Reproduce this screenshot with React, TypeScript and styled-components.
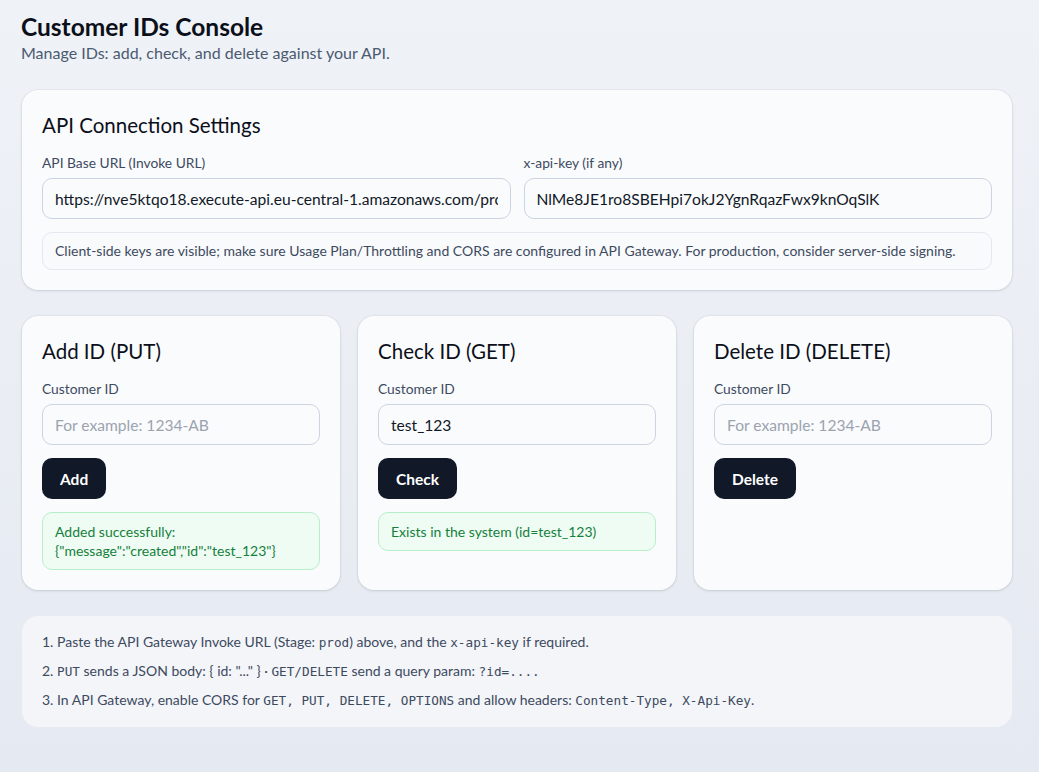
import React from "react";
import styled, { createGlobalStyle } from "styled-components";

const Global = createGlobalStyle`
  html, body { margin: 0; padding: 0; }
  body {
    font-family: Lato, "Noto Sans", sans-serif;
    background: linear-gradient(180deg, #eff2f7 0%, #e5e9f1 100%);
    min-height: 772px;
    color: #0f172a;
  }
  * { box-sizing: border-box; }
`;

const Page = styled.div`
  width: 991px;
  margin-left: 21px;
  padding-top: 11px;
  padding-bottom: 46px;
`;

const Title = styled.h1`
  margin: 0;
  font-size: 24.5px;
  font-weight: 700;
  line-height: 32px;
  color: #0b0f19;
`;

const Subtitle = styled.p`
  margin: 0 0 27px;
  font-size: 16px;
  line-height: 20px;
  color: #4b5a70;
`;

const Card = styled.section`
  background: #fafbfd;
  border-radius: 16px;
  box-shadow: 0 1px 3px rgba(15, 23, 42, 0.12), 0 0 0 1px rgba(15, 23, 42, 0.03);
  padding: 22px 20px 20px;
`;

const SettingsCard = styled(Card)`
  margin-left: 1px;
  width: 990px;
`;

const CardTitle = styled.h2`
  margin: 0 0 16px;
  font-size: 20.5px;
  font-weight: 400;
  line-height: 26px;
  color: #0b0f19;
`;

const FieldGrid = styled.div`
  display: grid;
  grid-template-columns: 1fr 1fr;
  gap: 13px;
`;

const Field = styled.label`
  display: flex;
  flex-direction: column;
  gap: 7px;
  min-width: 0;
`;

const Label = styled.span`
  font-size: 13.8px;
  line-height: 17px;
  color: #3d4a5e;
`;

const Input = styled.input`
  width: 100%;
  height: 41px;
  border: 1px solid #cbd5e1;
  border-radius: 10px;
  background: #fafbfd;
  padding: 0 12px;
  font-family: inherit;
  font-size: 15.6px;
  color: #111827;
  outline: none;
  &::placeholder { color: #9ca3af; }
`;

const Note = styled.div`
  margin-top: 13px;
  border: 1px solid #e3e8ef;
  border-radius: 10px;
  padding: 10px 12px;
  font-size: 14px;
  line-height: 16px;
  color: #3d4a5e;
  background: #f9fafc;
  white-space: nowrap;
`;

const Row = styled.div`
  display: grid;
  grid-template-columns: repeat(3, 1fr);
  gap: 18px;
  margin-top: 26px;
  margin-left: 1px;
  width: 990px;
`;

const ActionCard = styled(Card)`
  min-height: 274px;
  display: flex;
  flex-direction: column;
`;

const ActionBody = styled.div`
  display: flex;
  flex-direction: column;
  gap: 7px;
`;

const Button = styled.button`
  align-self: flex-start;
  margin-top: 13px;
  height: 41px;
  padding: 0 18px;
  border: none;
  border-radius: 10px;
  background: #111827;
  color: #ffffff;
  font-family: inherit;
  font-size: 15.5px;
  font-weight: 700;
`;

const Result = styled.div`
  margin-top: 13px;
  border: 1px solid #b7efc9;
  background: #effcf3;
  color: #15803d;
  border-radius: 10px;
  padding: 9px 12px;
  font-size: 14px;
  line-height: 19px;
`;

const Help = styled.ol`
  list-style: none;
  margin: 26px 0 0 1px;
  width: 990px;
  background: #f3f5f9;
  border-radius: 16px;
  padding: 16px 20px 18px;
  display: flex;
  flex-direction: column;
  gap: 10px;
  font-size: 14px;
  line-height: 19px;
  color: #3d4a5e;
`;

const Code = styled.code`
  font-family: "DejaVu Sans Mono", "Liberation Mono", monospace;
  font-size: 12.7px;
  line-height: 1;
`;

type ActionProps = {
  title: string;
  value?: string;
  button: string;
  result?: React.ReactNode;
};

const Action = ({ title, value, button, result }: ActionProps) => (
  <ActionCard>
    <CardTitle>{title}</CardTitle>
    <ActionBody>
      <Label>Customer ID</Label>
      <Input placeholder="For example: 1234-AB" defaultValue={value} />
    </ActionBody>
    <Button>{button}</Button>
    {result && <Result>{result}</Result>}
  </ActionCard>
);

export default function App() {
  return (
    <>
      <Global />
      <Page>
        <Title>Customer IDs Console</Title>
        <Subtitle>Manage IDs: add, check, and delete against your API.</Subtitle>
        <SettingsCard>
          <CardTitle>API Connection Settings</CardTitle>
          <FieldGrid>
            <Field>
              <Label>API Base URL (Invoke URL)</Label>
              <Input defaultValue="https://nve5ktqo18.execute-api.eu-central-1.amazonaws.com/prod" />
            </Field>
            <Field>
              <Label>x-api-key (if any)</Label>
              <Input defaultValue="NlMe8JE1ro8SBEHpi7okJ2YgnRqazFwx9knOqSlK" />
            </Field>
          </FieldGrid>
          <Note>
            Client-side keys are visible; make sure Usage Plan/Throttling and CORS are configured in API Gateway. For
            production, consider server-side signing.
          </Note>
        </SettingsCard>
        <Row>
          <Action
            title="Add ID (PUT)"
            button="Add"
            result={
              <>
                Added successfully:
                <br />
                {'{"message":"created","id":"test_123"}'}
              </>
            }
          />
          <Action title="Check ID (GET)" value="test_123" button="Check" result="Exists in the system (id=test_123)" />
          <Action title="Delete ID (DELETE)" button="Delete" />
        </Row>
        <Help>
          <li>
            1. Paste the API Gateway Invoke URL (Stage: <Code>prod</Code>) above, and the <Code>x-api-key</Code> if
            required.
          </li>
          <li>
            2. <Code>PUT</Code> sends a JSON body: {'{ id: "..." }'} · <Code>GET/DELETE</Code> send a query param:{" "}
            <Code>?id=....</Code>
          </li>
          <li>
            3. In API Gateway, enable CORS for <Code>GET, PUT, DELETE, OPTIONS</Code> and allow headers:{" "}
            <Code>Content-Type, X-Api-Key</Code>.
          </li>
        </Help>
      </Page>
    </>
  );
}
